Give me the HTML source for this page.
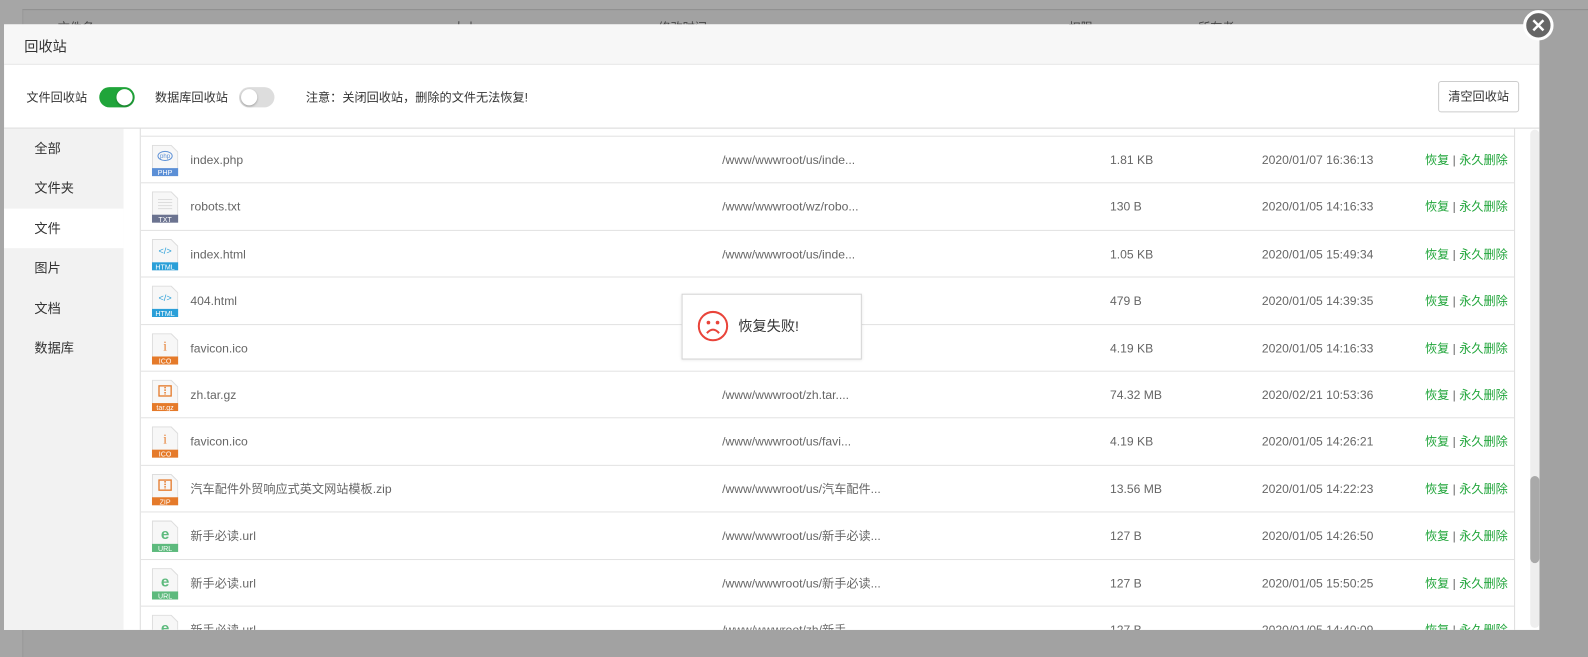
<!DOCTYPE html>
<html><head><meta charset="utf-8"><style>
*{margin:0;padding:0;box-sizing:border-box}
body{width:1588px;height:643px;overflow:hidden;background:#a6a6a6;font-family:"Liberation Sans","Noto Sans CJK SC",sans-serif;position:relative}
#w{position:absolute;left:0;top:0;width:1568px;height:635px;transform:scale(1.01276);transform-origin:0 0}
.bgpanel{position:absolute;left:22px;top:9px;width:1546px;height:640px;border-top:1px solid #8f8f8f;border-left:1px solid #999;background:#a2a2a2}
.bgh{position:absolute;top:18px;font-size:12px;color:#444}
.modal{position:absolute;left:4px;top:24px;width:1516px;height:598px;background:#fff;overflow:hidden}
.hd{height:40px;background:#f7f7f7;border-bottom:1px solid #e8e8e8;font-size:14px;color:#333;padding:12px 0 0 20px}
.tb{position:absolute;top:41px;left:0;width:1516px;height:62px;border-bottom:1px solid #d8d8d8}
.t{position:absolute;font-size:12px;color:#333;top:0;line-height:62px}
.sw{position:absolute;top:21px;width:35px;height:20px;border-radius:10px}
.sw i{position:absolute;top:2px;width:16px;height:16px;border-radius:50%;background:#fff;box-shadow:0 1px 2px rgba(0,0,0,.3)}
.btn{position:absolute;left:1416px;top:15px;width:80px;height:31px;border:1px solid #ccc;border-radius:3px;font-size:12px;color:#333;text-align:center;line-height:29px}
.side{position:absolute;left:0;top:103px;width:118px;height:495px;background:#f2f2f2}
.side div{height:39.4px;line-height:39.4px;padding-left:30px;font-size:13px;color:#333}
.side .on{background:#fff}
.tbl{position:absolute;left:134px;top:103px;width:1358px;height:495px;border-left:1px solid #ddd;border-right:1px solid #ddd;overflow:hidden}
.row{position:absolute;left:0;width:1358px;height:46.4px;border-top:1px solid #e2e2e2;font-size:12px;color:#666}
.row span{position:absolute;top:0;line-height:46px;white-space:nowrap}
.a{color:#20a53a;font-weight:normal}
.ic{position:absolute;left:11px;top:8px;width:26px;height:31px}
.sb{position:absolute;left:1507px;top:104px;width:9px;height:492px;background:#eee;border-radius:5px}
.sb i{position:absolute;left:0;top:342px;width:9px;height:86px;background:#a9a9a9;border-radius:5px}
.toast{position:absolute;left:673px;top:290px;width:178px;height:65px;background:#fff;border:1px solid #d4d4d4;box-shadow:0 1px 3px rgba(0,0,0,.1)}
.close{position:absolute;left:1504px;top:10px;width:30px;height:30px;border-radius:50%;background:#666;border:3px solid #fff}
</style></head><body>
<div id="w">
<div class="bgpanel"></div>
<span class="bgh" style="left:57px">文件名</span><span class="bgh" style="left:447px">大小</span><span class="bgh" style="left:650px">修改时间</span><span class="bgh" style="left:1055px">权限</span><span class="bgh" style="left:1183px">所有者</span>
<div class="modal">
<div class="hd">回收站</div>
<div class="tb">
<span class="t" style="left:22px">文件回收站</span>
<div class="sw" style="left:94px;background:#20a53a"><i style="left:17px"></i></div>
<span class="t" style="left:149px">数据库回收站</span>
<div class="sw" style="left:232px;background:#ddd"><i style="left:2px"></i></div>
<span class="t" style="left:298px">注意：关闭回收站，删除的文件无法恢复!</span>
<div class="btn">清空回收站</div>
</div>
<div class="side"><div>全部</div><div>文件夹</div><div class="on">文件</div><div>图片</div><div>文档</div><div>数据库</div></div>
<div class="tbl" id="t"></div>
<div class="sb"><i></i></div>
</div>
<div class="toast">
<svg style="position:absolute;left:14px;top:15px" width="32" height="32" viewBox="0 0 32 32"><circle cx="16" cy="16" r="14" fill="none" stroke="#e9443a" stroke-width="2"/><circle cx="11.5" cy="12.5" r="1.8" fill="#e9443a"/><circle cx="20.5" cy="12.5" r="1.8" fill="#e9443a"/><path d="M10 23 Q16 16 22 23" fill="none" stroke="#e9443a" stroke-width="2"/></svg>
<span style="position:absolute;left:55px;top:0;line-height:63px;font-size:14px;color:#333">恢复失败!</span>
</div>
<div class="close"><svg width="24" height="24" viewBox="0 0 24 24"><path d="M7 7L17 17M17 7L7 17" stroke="#fff" stroke-width="2.4"/></svg></div>
</div>
<script>
var R=[["php","index.php","/www/wwwroot/us/inde...","1.81 KB","2020/01/07 16:36:13"],
["txt","robots.txt","/www/wwwroot/wz/robo...","130 B","2020/01/05 14:16:33"],
["html","index.html","/www/wwwroot/us/inde...","1.05 KB","2020/01/05 15:49:34"],
["html","404.html","","479 B","2020/01/05 14:39:35"],
["ico","favicon.ico","","4.19 KB","2020/01/05 14:16:33"],
["gz","zh.tar.gz","/www/wwwroot/zh.tar....","74.32 MB","2020/02/21 10:53:36"],
["ico","favicon.ico","/www/wwwroot/us/favi...","4.19 KB","2020/01/05 14:26:21"],
["zip","汽车配件外贸响应式英文网站模板.zip","/www/wwwroot/us/汽车配件...","13.56 MB","2020/01/05 14:22:23"],
["url","新手必读.url","/www/wwwroot/us/新手必读...","127 B","2020/01/05 14:26:50"],
["url","新手必读.url","/www/wwwroot/us/新手必读...","127 B","2020/01/05 15:50:25"],
["url","新手必读.url","/www/wwwroot/zh/新手...","127 B","2020/01/05 14:40:09"]];
var C={php:["#5b8fd6","PHP"],txt:["#6b7390","TXT"],html:["#2a9fd8","HTML"],ico:["#e57a2a","ICO"],gz:["#e57a2a","tar.gz"],zip:["#e57a2a","ZIP"],url:["#5dba7d","URL"]};
function icon(k){var c=C[k][0],l=C[k][1],g="";
if(k=="php")g='<ellipse cx="13" cy="11" rx="7" ry="4.5" fill="none" stroke="'+c+'" stroke-width="1"/><text x="13" y="13" font-size="6" text-anchor="middle" fill="'+c+'" font-family="Liberation Sans">php</text>';
else if(k=="txt")g='<path d="M6 8H20M6 11H20M6 14H20M6 17H20" stroke="#ddd" stroke-width="1"/>';
else if(k=="html")g='<text x="13" y="15" font-size="9" text-anchor="middle" fill="'+c+'" font-family="Liberation Sans">&lt;/&gt;</text>';
else if(k=="ico")g='<text x="13" y="17" font-size="13" text-anchor="middle" fill="'+c+'" font-family="Liberation Serif">i</text>';
else if(k=="gz"||k=="zip")g='<rect x="7" y="6" width="12" height="10" fill="none" stroke="'+c+'" stroke-width="1.3"/><path d="M13 7V15" stroke="'+c+'" stroke-width="1.5" stroke-dasharray="1.5 1"/>';
else g='<text x="13" y="18" font-size="15" font-weight="bold" text-anchor="middle" fill="'+c+'" font-family="Liberation Sans">e</text>';
return '<svg class="ic" viewBox="0 0 26 31"><path d="M0.5 0.5H19L25.5 7V30.5H0.5Z" fill="#f7f7f7" stroke="#ddd"/>'+g+'<rect x="0" y="23" width="26" height="8" fill="'+c+'"/><text x="13" y="30" font-size="7" text-anchor="middle" fill="#fff" font-family="Liberation Sans">'+l+'</text></svg>';}
var h='<div class="row" style="top:-39px"></div>';
R.forEach(function(r,i){h+='<div class="row" style="top:'+(7+i*46.4)+'px">'+icon(r[0])+'<span style="left:49px">'+r[1]+'</span><span style="left:574px">'+r[2]+'</span><span style="left:957px">'+r[3]+'</span><span style="left:1107px">'+r[4]+'</span><span style="left:1268px"><b class="a">恢复</b> | <b class="a">永久删除</b></span></div>';});
document.getElementById('t').innerHTML=h;
</script>
</body></html>
